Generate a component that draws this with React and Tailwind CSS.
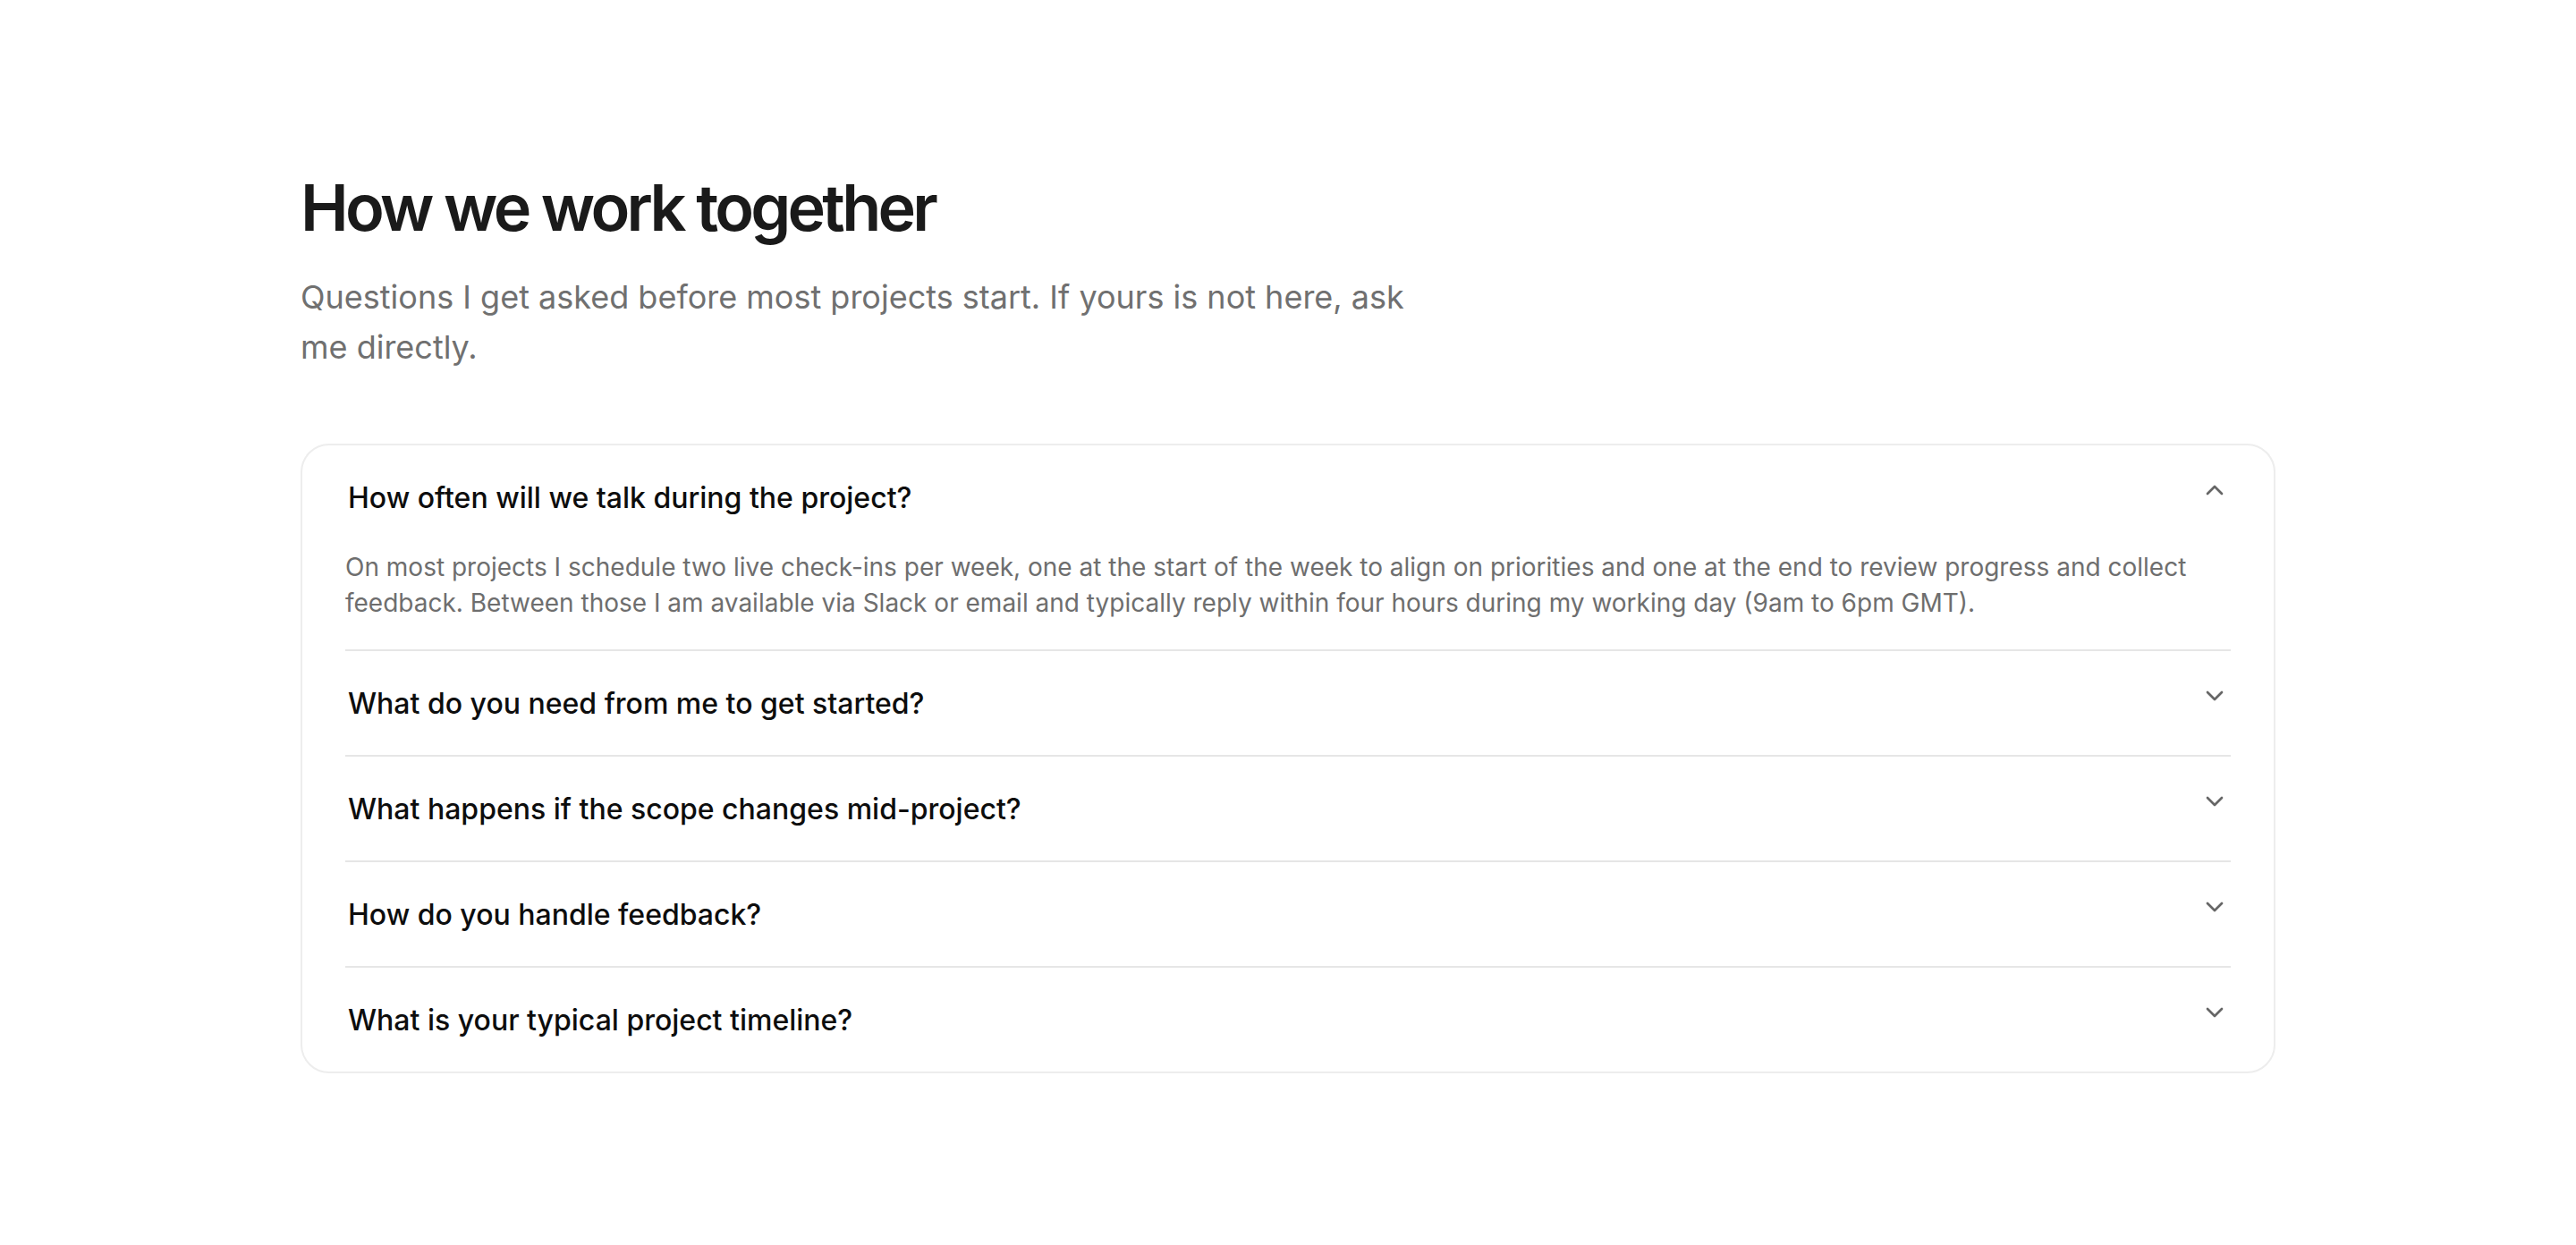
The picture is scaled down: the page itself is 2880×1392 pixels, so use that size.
import React, { useState } from 'react';
import { ChevronDown, ChevronUp } from 'lucide-react';

const faqs = [
  {
    q: 'How often will we talk during the project?',
    a: 'On most projects I schedule two live check-ins per week, one at the start of the week to align on priorities and one at the end to review progress and collect feedback. Between those I am available via Slack or email and typically reply within four hours during my working day (9am to 6pm GMT).',
  },
  {
    q: 'What do you need from me to get started?',
    a: 'A short brief with your goals, any existing brand assets, access to the relevant tools, and one main point of contact who can make decisions.',
  },
  {
    q: 'What happens if the scope changes mid-project?',
    a: 'We talk it through first. Small tweaks are absorbed; larger changes get a written change request with the impact on time and budget before any work starts.',
  },
  {
    q: 'How do you handle feedback?',
    a: 'Feedback is collected in one shared document per round, so nothing gets lost across threads. Each milestone includes two rounds of revisions.',
  },
  {
    q: 'What is your typical project timeline?',
    a: 'Most projects run between four and eight weeks, depending on scope, with a kickoff in week one and a handover session at the end.',
  },
];

const FaqItem = ({ item, open, onToggle, last }) => (
  <div className={last ? '' : 'border-b-2 border-[#e6e6e6]'}>
    <button
      type="button"
      onClick={onToggle}
      className="w-full flex items-start justify-between gap-6 pl-[3px] pr-[2px] pt-[35px] pb-[33px] text-left cursor-pointer"
    >
      <span className="text-[32px] leading-[48px] font-medium text-[#0d0d0d]">{item.q}</span>
      {open ? (
        <ChevronUp size={32} strokeWidth={2} className="shrink-0 -mt-[1px] text-[#666666]" />
      ) : (
        <ChevronDown size={32} strokeWidth={2} className="shrink-0 -mt-[1px] text-[#666666]" />
      )}
    </button>
    {open && (
      <p className="pb-8 text-[28px] leading-[40px] text-[#6e6e6e]">{item.a}</p>
    )}
  </div>
);

export default function App() {
  const [openIndex, setOpenIndex] = useState(0);

  return (
    <div className="min-h-screen bg-white font-['Inter',sans-serif] antialiased">
      <section className="mx-auto w-full max-w-[2208px] pt-48 pb-40">
        <h1 className="text-[72px] leading-[80px] font-semibold tracking-[-0.052em] text-[#1a1a1a]">
          How we work together
        </h1>
        <p className="mt-8 max-w-[1260px] text-[36px] leading-[56px] text-[#707070]">
          Questions I get asked before most projects start. If yours is not here, ask me directly.
        </p>

        <div className="mt-20 rounded-[32px] border-2 border-[#ededed] bg-white px-12">
          {faqs.map((item, i) => (
            <FaqItem
              key={item.q}
              item={item}
              open={openIndex === i}
              last={i === faqs.length - 1}
              onToggle={() => setOpenIndex(openIndex === i ? -1 : i)}
            />
          ))}
        </div>
      </section>
    </div>
  );
}
